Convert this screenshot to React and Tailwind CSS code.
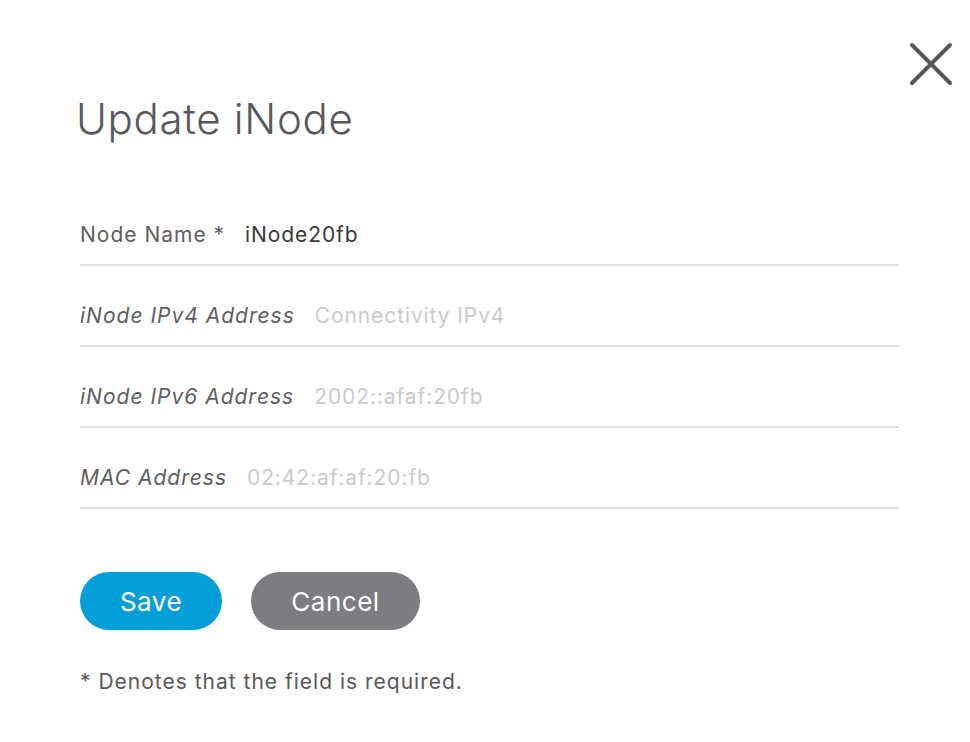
import React from "react";

const FIELDS = [
  { label: "Node Name *", value: "iNode20fb", italic: false, filled: true },
  { label: "iNode IPv4 Address", value: "Connectivity IPv4", italic: true, filled: false },
  { label: "iNode IPv6 Address", value: "2002::afaf:20fb", italic: true, filled: false },
  { label: "MAC Address", value: "02:42:af:af:20:fb", italic: true, filled: false },
];

export default function App() {
  return (
    <div
      className="relative w-[970px] h-[742px] bg-white text-[#58585b]"
      style={{ fontFamily: "Inter, 'Liberation Sans', sans-serif" }}
    >
      {/* Close */}
      <button className="absolute left-[906px] top-[39px] w-[50px] h-[50px] flex items-center justify-center">
        <svg width="46" height="46" viewBox="0 0 46 46" fill="none">
          <path d="M4 4L42 42M42 4L4 42" stroke="#58585b" strokeWidth="4" strokeLinecap="round" />
        </svg>
      </button>

      <div className="pl-[80px] pr-[71px] pt-[93px]">
        <h1 className="-ml-[4px] text-[42px] leading-[52px] font-light tracking-[0.7px] text-[#58585b]">
          Update iNode
        </h1>

        {/* Fields */}
        <div className="mt-[40px]">
          {FIELDS.map((f) => (
            <div
              key={f.label}
              className="flex items-center gap-[20px] pt-[35px] pb-[14px] border-b-2 border-[#e0e0e0]"
            >
              <span
                className={`text-[21px] leading-[30px] tracking-[1px] text-[#5e5e61] ${f.italic ? "italic" : ""}`}
              >
                {f.label}
              </span>
              <span
                className={`text-[21px] leading-[30px] tracking-[0.9px] ${f.filled ? "text-[#39393b]" : "text-[#c9cacd]"}`}
              >
                {f.value}
              </span>
            </div>
          ))}
        </div>

        {/* Actions */}
        <div className="flex gap-[29px] mt-[63px]">
          <button className="w-[142px] h-[58px] rounded-full bg-[#049fd9] text-white text-[26px] tracking-[0.5px]">
            Save
          </button>
          <button className="w-[169px] h-[58px] rounded-full bg-[#7c7c81] text-white text-[26px] tracking-[0.5px]">
            Cancel
          </button>
        </div>

        <p className="mt-[38px] text-[21px] leading-[28px] tracking-[1px] text-[#58585b]">
          * Denotes that the field is required.
        </p>
      </div>
    </div>
  );
}
